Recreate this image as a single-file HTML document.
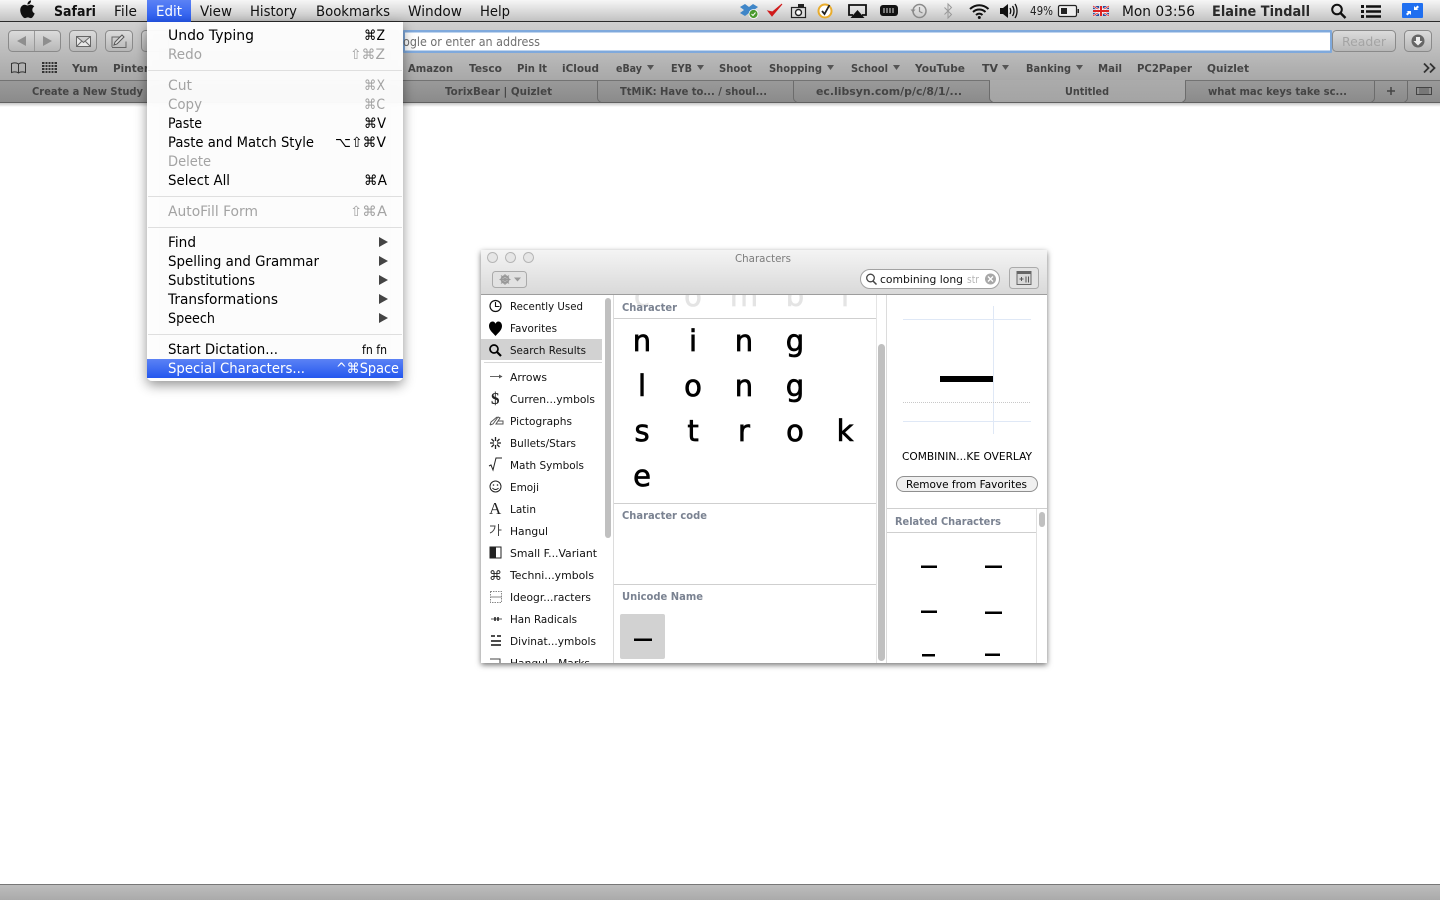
<!DOCTYPE html>
<html><head><meta charset="utf-8"><title>Characters</title>
<style>
html,body{margin:0;padding:0;background:#fff;width:1440px;height:900px;overflow:hidden}
svg{display:block}
text{font-family:"DejaVu Sans","Liberation Sans",sans-serif;white-space:pre}
.mb{font-size:14px;fill:#111}
.bm{font-size:11px;font-weight:bold;fill:#444}
.tb{font-size:11px;font-weight:bold;fill:#444}
.mi{font-size:14px;fill:#000}
.md{font-size:14px;fill:#a3a3a3}
.sb{font-size:11px;fill:#111}
.hd{font-size:11px;font-weight:bold;fill:#7a8291}
.gl{font-size:29px;fill:#000;stroke:#000;stroke-width:.7px;text-anchor:middle}
</style></head><body>
<svg xmlns="http://www.w3.org/2000/svg" width="1440" height="900" viewBox="0 0 1440 900">
<defs>
<linearGradient id="gMenu" x1="0" y1="0" x2="0" y2="1"><stop offset="0" stop-color="#f6f6f6"/><stop offset="1" stop-color="#c2c2c2"/></linearGradient>
<linearGradient id="gTool" x1="0" y1="0" x2="0" y2="1"><stop offset="0" stop-color="#d0d0d0"/><stop offset="1" stop-color="#a8a8a8"/></linearGradient>
<linearGradient id="gTab" x1="0" y1="0" x2="0" y2="1"><stop offset="0" stop-color="#9a9a9a"/><stop offset="1" stop-color="#8b8b8b"/></linearGradient>
<linearGradient id="gTabA" x1="0" y1="0" x2="0" y2="1"><stop offset="0" stop-color="#ababab"/><stop offset="1" stop-color="#a4a4a4"/></linearGradient>
<linearGradient id="gShadow" x1="0" y1="0" x2="0" y2="1"><stop offset="0" stop-color="#000" stop-opacity=".22"/><stop offset="1" stop-color="#000" stop-opacity="0"/></linearGradient>
<linearGradient id="gBlue" x1="0" y1="0" x2="0" y2="1"><stop offset="0" stop-color="#5b82f5"/><stop offset="1" stop-color="#2457ee"/></linearGradient>
<linearGradient id="gWin" x1="0" y1="0" x2="0" y2="1"><stop offset="0" stop-color="#f4f4f4"/><stop offset="1" stop-color="#d9d9d9"/></linearGradient>
<linearGradient id="gBtn" x1="0" y1="0" x2="0" y2="1"><stop offset="0" stop-color="#e4e4e4" stop-opacity=".7"/><stop offset="1" stop-color="#b4b4b4" stop-opacity=".7"/></linearGradient>
<linearGradient id="gStatus" x1="0" y1="0" x2="0" y2="1"><stop offset="0" stop-color="#bdbdbd"/><stop offset="1" stop-color="#aaaaaa"/></linearGradient>
<filter id="fMenu" x="-15%" y="-10%" width="130%" height="125%"><feDropShadow dx="0" dy="4" stdDeviation="6" flood-color="#000" flood-opacity=".45"/></filter>
<filter id="fWin" x="-5%" y="-5%" width="110%" height="112%"><feDropShadow dx="0" dy="2" stdDeviation="3" flood-color="#000" flood-opacity=".55"/></filter>
<clipPath id="cSide"><rect x="481" y="295" width="130" height="368"/></clipPath>
<clipPath id="cTop"><rect x="614" y="295" width="262" height="12"/></clipPath>
<clipPath id="cRel"><rect x="887" y="533" width="149" height="129"/></clipPath>
</defs>

<!-- page -->
<rect width="1440" height="900" fill="#fff"/>
<rect x="0" y="22" width="1440" height="58" fill="url(#gTool)"/>
<rect x="0" y="80" width="1440" height="22" fill="url(#gTab)"/>
<rect x="0" y="80" width="1440" height="1" fill="#737373"/>
<rect x="0" y="102" width="1440" height="1" fill="#606060"/>
<rect x="0" y="103" width="1440" height="4" fill="url(#gShadow)"/>

<!-- toolbar buttons -->
<g fill="url(#gBtn)" stroke="#8a8a8a">
<rect x="8.500" y="30.500" width="52" height="21" rx="4"/>
<rect x="69.500" y="30.500" width="27" height="21" rx="4"/>
<rect x="105.500" y="30.500" width="27" height="21" rx="4"/>
<rect x="141.500" y="30.500" width="27" height="21" rx="4"/>
<rect x="1332.500" y="30.500" width="63" height="21" rx="4"/>
<rect x="1404.500" y="30.500" width="27" height="21" rx="4"/>
</g>
<line x1="34.500" y1="31" x2="34.500" y2="51" stroke="#999"/>
<path d="M17 41l9-5v10zM52 41l-9-5v10z" fill="#8e8e8e"/>
<path d="M76.500 36.500h14v10h-14zM76.500 36.500l7 6 7-6M76.500 46.500l5-5M90.500 46.500l-5-5" fill="#e8e8e8" stroke="#666" stroke-width="1"/>
<path d="M112 47.500h14v-6M121 37h-9v10" fill="none" stroke="#666"/>
<path d="M114 45l1-3 7-7 2 2-7 7z" fill="#ddd" stroke="#555"/>
<circle cx="1418" cy="41" r="6.500" fill="#666"/>
<path d="M1416 37h4v4h2.500l-4.500 4.500-4.500-4.500h2.500z" fill="#eee"/>
<text x="1342" y="46" font-size="12" fill="#a4a4a4" textLength="44" lengthAdjust="spacingAndGlyphs">Reader</text>

<!-- address field -->
<rect x="403" y="30" width="929" height="23" rx="1" fill="#7fa9dc"/>
<rect x="405" y="32.500" width="925" height="18" fill="#fff"/>
<text x="403" y="46" font-size="12" fill="#6f6f6f" textLength="137" lengthAdjust="spacingAndGlyphs">ogle or enter an address</text>

<!-- bookmarks -->
<path d="M11.500 63.500c3-1 5-1 7 .5 2-1.500 4-1.500 7-.5v9c-3-1-5-1-7 .5-2-1.500-4-1.500-7-.5zM18.500 64v9" fill="none" stroke="#333"/>
<g fill="#333"><rect x="42" y="62" width="15" height="2"/><rect x="42" y="65" width="15" height="2"/><rect x="42" y="68" width="15" height="2"/><rect x="42" y="71" width="15" height="2"/></g>
<g stroke="#b8b8b8"><line x1="45" y1="62" x2="45" y2="73"/><line x1="48" y1="62" x2="48" y2="73"/><line x1="51" y1="62" x2="51" y2="73"/><line x1="54" y1="62" x2="54" y2="73"/></g>
<g class="bm">
<text class="bm" x="72" y="72" textLength="26" lengthAdjust="spacingAndGlyphs">Yum</text>
<text class="bm" x="113" y="72" textLength="36" lengthAdjust="spacingAndGlyphs">Pinter</text>
<text class="bm" x="408" y="72" textLength="45" lengthAdjust="spacingAndGlyphs">Amazon</text>
<text class="bm" x="469" y="72" textLength="33" lengthAdjust="spacingAndGlyphs">Tesco</text>
<text class="bm" x="517" y="72" textLength="30" lengthAdjust="spacingAndGlyphs">Pin It</text>
<text class="bm" x="562" y="72" textLength="37" lengthAdjust="spacingAndGlyphs">iCloud</text>
<text class="bm" x="616" y="72" textLength="26" lengthAdjust="spacingAndGlyphs">eBay</text>
<text class="bm" x="671" y="72" textLength="21" lengthAdjust="spacingAndGlyphs">EYB</text>
<text class="bm" x="719" y="72" textLength="33" lengthAdjust="spacingAndGlyphs">Shoot</text>
<text class="bm" x="769" y="72" textLength="53" lengthAdjust="spacingAndGlyphs">Shopping</text>
<text class="bm" x="851" y="72" textLength="37" lengthAdjust="spacingAndGlyphs">School</text>
<text class="bm" x="915" y="72" textLength="50" lengthAdjust="spacingAndGlyphs">YouTube</text>
<text class="bm" x="982" y="72" textLength="16" lengthAdjust="spacingAndGlyphs">TV</text>
<text class="bm" x="1026" y="72" textLength="45" lengthAdjust="spacingAndGlyphs">Banking</text>
<text class="bm" x="1098" y="72" textLength="24" lengthAdjust="spacingAndGlyphs">Mail</text>
<text class="bm" x="1137" y="72" textLength="55" lengthAdjust="spacingAndGlyphs">PC2Paper</text>
<text class="bm" x="1207" y="72" textLength="42" lengthAdjust="spacingAndGlyphs">Quizlet</text>
</g>
<path d="M647 65h7l-3.500 5zM697 65h7l-3.500 5zM827 65h7l-3.500 5zM893 65h7l-3.500 5zM1002 65h7l-3.500 5zM1076 65h7l-3.500 5z" fill="#555"/>
<path d="M1424 63.500l4.500 4.500-4.500 4.500M1430 63.500l4.500 4.500-4.500 4.500" fill="none" stroke="#333" stroke-width="1.800"/>

<!-- tabs -->
<path d="M990 80v18c0 2 1 3 3 4h189c2-1 3-2 3-4v-18z" fill="url(#gTabA)"/>
<g fill="none" stroke="#6c6c6c">
<path d="M597.500 81v17c0 2 1 3 3 4"/>
<path d="M793.500 81v17c0 2 1 3 3 4"/>
<path d="M989.500 81v17c0 2 1 3 3 4"/>
<path d="M1185.500 81v17c0 2-1 3-3 4"/>
<path d="M1374.500 81v17c0 2-1 3-3 4"/>
<path d="M1407.500 81v17c0 2-1 3-3 4"/>
</g>
<text class="tb" x="32" y="95" textLength="111" lengthAdjust="spacingAndGlyphs">Create a New Study</text>
<text class="tb" x="445" y="95" textLength="107" lengthAdjust="spacingAndGlyphs">TorixBear | Quizlet</text>
<text class="tb" x="620" y="95" textLength="147" lengthAdjust="spacingAndGlyphs">TtMiK: Have to... / shoul...</text>
<text class="tb" x="816" y="95" textLength="146" lengthAdjust="spacingAndGlyphs">ec.libsyn.com/p/c/8/1/...</text>
<text class="tb" x="1065" y="95" textLength="44" lengthAdjust="spacingAndGlyphs">Untitled</text>
<text class="tb" x="1208" y="95" textLength="139" lengthAdjust="spacingAndGlyphs">what mac keys take sc...</text>
<path d="M1387 91h8M1391 87v8" stroke="#444" stroke-width="1.500"/>
<path d="M1416.500 87.500h15v7h-15z" fill="none" stroke="#444"/><path d="M1419 88h10v6h-10z" fill="#777"/>

<!-- status bar -->
<rect x="0" y="884" width="1440" height="1" fill="#777"/>
<rect x="0" y="885" width="1440" height="15" fill="url(#gStatus)"/>

<!-- menu bar -->
<rect x="0" y="0" width="1440" height="21" fill="url(#gMenu)"/>
<rect x="0" y="21" width="1440" height="1" fill="#2a2a2a"/>
<rect x="147" y="0" width="44" height="22" fill="url(#gBlue)"/>
<path transform="translate(17 -1) scale(.9)" fill="#111" d="M17.050 12.040c-.03-2.500 2.040-3.700 2.130-3.760-1.160-1.700-2.970-1.930-3.610-1.960-1.540-.16-3 .9-3.780.9-.78 0-1.980-.88-3.260-.86-1.680.03-3.220.98-4.090 2.480-1.740 3.020-.45 7.500 1.250 9.950.83 1.200 1.820 2.550 3.120 2.500 1.250-.05 1.720-.81 3.230-.81 1.510 0 1.930.81 3.250.78 1.340-.02 2.190-1.220 3.010-2.430.95-1.390 1.340-2.740 1.360-2.810-.03-.01-2.610-1-2.640-3.980zM14.560 4.700c.69-.84 1.160-2 1.030-3.160-1 .04-2.200.66-2.920 1.500-.64.74-1.200 1.920-1.050 3.060 1.110.09 2.250-.57 2.940-1.400z"/>
<text class="mb" x="54" y="16" font-weight="bold" textLength="42" lengthAdjust="spacingAndGlyphs">Safari</text>
<text class="mb" x="114" y="16" textLength="23" lengthAdjust="spacingAndGlyphs">File</text>
<text class="mb" x="156" y="16" style="fill:#fff" textLength="26" lengthAdjust="spacingAndGlyphs">Edit</text>
<text class="mb" x="200" y="16" textLength="32" lengthAdjust="spacingAndGlyphs">View</text>
<text class="mb" x="250" y="16" textLength="47" lengthAdjust="spacingAndGlyphs">History</text>
<text class="mb" x="316" y="16" textLength="74" lengthAdjust="spacingAndGlyphs">Bookmarks</text>
<text class="mb" x="408" y="16" textLength="54" lengthAdjust="spacingAndGlyphs">Window</text>
<text class="mb" x="480" y="16" textLength="30" lengthAdjust="spacingAndGlyphs">Help</text>

<!-- menu extras -->
<g>
<path d="M745 4l-5 3 4 3-4 3 5 3 4-3 4 3 5-3-4-3 4-3-5-3-4 3z" fill="#3f86c8"/>
<circle cx="753.500" cy="14" r="4.500" fill="#4a9a2e" stroke="#fff" stroke-width=".8"/>
<path d="M751.500 14l1.500 1.500 2.500-3" fill="none" stroke="#fff"/>
<path d="M768 11l4 5 10-12-9.500 8z" fill="#d01a1a" stroke="#d01a1a" stroke-width="1"/>
<rect x="791.500" y="7.500" width="14" height="10" fill="#ddd" stroke="#222" stroke-width="1.200"/>
<rect x="798" y="4" width="6" height="3" fill="#222"/>
<circle cx="798.500" cy="12.500" r="3" fill="#fff" stroke="#222" stroke-width="1.400"/>
<circle cx="825" cy="11" r="6.500" fill="#fff" stroke="#e9ac2c" stroke-width="2"/>
<path d="M822 11l2.500 3 5-9" fill="none" stroke="#222" stroke-width="1.800"/>
<path d="M853 15h-4v-10h17v10h-4" fill="none" stroke="#111" stroke-width="1.800"/>
<path d="M857.500 10l7 8h-14z" fill="#111"/>
<rect x="880" y="5" width="18" height="11" rx="3" fill="#111"/>
<path d="M884 8v5M887 8v5M890 8v5M893 8v5" stroke="#bbb" stroke-width="1.200"/>
<circle cx="919.500" cy="11" r="6.500" fill="none" stroke="#8a8a8a" stroke-width="1.500"/>
<path d="M919.500 7v4.500l3 1.500" fill="none" stroke="#8a8a8a" stroke-width="1.200"/>
<path d="M910.500 9.500l2.500 3 2.500-3z" fill="#8a8a8a"/>
<path d="M944.500 7.500l7 7-3.500 3.500v-14l3.500 3.500-7 7" fill="none" stroke="#999" stroke-width="1"/>
<path d="M970 9c5.500-5 13-5 18.500 0M973 12c3.700-3.300 8.800-3.300 12.500 0M976 15c2-1.800 4.500-1.800 6.500 0" fill="none" stroke="#111" stroke-width="2"/>
<circle cx="979.300" cy="17.500" r="1.500" fill="#111"/>
<path d="M1000 8h3l5-4v14l-5-4h-3z" fill="#111"/>
<path d="M1010 8c1 2 1 4 0 6M1012.500 6c2 3 2 7 0 10M1015 4c2.700 4 2.700 10 0 14" fill="none" stroke="#111" stroke-width="1.300"/>
<text x="1030" y="15" font-size="12" fill="#222" textLength="23" lengthAdjust="spacingAndGlyphs">49%</text>
<rect x="1058.500" y="5.500" width="18" height="11" rx="1.500" fill="#eee" stroke="#222" stroke-width="1.200"/>
<rect x="1061" y="8" width="6" height="6" fill="#222"/>
<rect x="1077.500" y="9" width="1.500" height="4" fill="#222"/>
<rect x="1093" y="6" width="16" height="10" fill="#2a4a9a"/>
<path d="M1093 6l16 10M1109 6l-16 10" stroke="#fff" stroke-width="2"/>
<path d="M1093 6l16 10M1109 6l-16 10" stroke="#d22" stroke-width=".8"/>
<path d="M1101 6v10M1093 11h16" stroke="#fff" stroke-width="3.500"/>
<path d="M1101 6v10M1093 11h16" stroke="#d22" stroke-width="2"/>
<text class="mb" x="1122" y="16" textLength="73" lengthAdjust="spacingAndGlyphs">Mon 03:56</text>
<text class="mb" x="1212" y="16" font-weight="bold" style="fill:#2a2a2a" textLength="98" lengthAdjust="spacingAndGlyphs">Elaine Tindall</text>
<circle cx="1337" cy="9.500" r="4.800" fill="none" stroke="#111" stroke-width="2"/>
<path d="M1340.500 13l5 5" stroke="#111" stroke-width="2.400"/>
<path d="M1361 5h3v3h-3zM1361 10h3v3h-3zM1361 15h3v3h-3z" fill="#111"/>
<path d="M1366 6.500h15M1366 11.500h15M1366 16.500h15" stroke="#111" stroke-width="2.400"/>
<rect x="1402" y="3" width="21" height="15" rx="1" fill="#1f6ff0"/>
<path d="M1414 10v-4l1.500 1.500 2-2 1.500 1.500-2 2 1.500 1zM1411 11v4l-1.500-1.500-2 2-1.500-1.500 2-2-1.500-1z" fill="#fff"/>
</g>

<!-- Edit menu -->
<g filter="url(#fMenu)"><path d="M147 22h256v354a5 5 0 0 1-5 5h-246a5 5 0 0 1-5-5z" fill="#fff" fill-opacity=".95"/></g>
<g fill="#dfdfdf"><rect x="148" y="70" width="254" height="1"/><rect x="148" y="196" width="254" height="1"/><rect x="148" y="227" width="254" height="1"/><rect x="148" y="334" width="254" height="1"/></g>
<rect x="147" y="359" width="256" height="19" fill="url(#gBlue)"/>
<text class="mi" x="168" y="40" textLength="86" lengthAdjust="spacingAndGlyphs">Undo Typing</text>
<text class="md" x="168" y="59" textLength="34" lengthAdjust="spacingAndGlyphs">Redo</text>
<text class="md" x="168" y="90" textLength="24" lengthAdjust="spacingAndGlyphs">Cut</text>
<text class="md" x="168" y="109" textLength="34" lengthAdjust="spacingAndGlyphs">Copy</text>
<text class="mi" x="168" y="128" textLength="34" lengthAdjust="spacingAndGlyphs">Paste</text>
<text class="mi" x="168" y="147" textLength="146" lengthAdjust="spacingAndGlyphs">Paste and Match Style</text>
<text class="md" x="168" y="166" textLength="43" lengthAdjust="spacingAndGlyphs">Delete</text>
<text class="mi" x="168" y="185" textLength="62" lengthAdjust="spacingAndGlyphs">Select All</text>
<text class="md" x="168" y="216" textLength="90" lengthAdjust="spacingAndGlyphs">AutoFill Form</text>
<text class="mi" x="168" y="247" textLength="28" lengthAdjust="spacingAndGlyphs">Find</text>
<text class="mi" x="168" y="266" textLength="151" lengthAdjust="spacingAndGlyphs">Spelling and Grammar</text>
<text class="mi" x="168" y="285" textLength="87" lengthAdjust="spacingAndGlyphs">Substitutions</text>
<text class="mi" x="168" y="304" textLength="110" lengthAdjust="spacingAndGlyphs">Transformations</text>
<text class="mi" x="168" y="323" textLength="47" lengthAdjust="spacingAndGlyphs">Speech</text>
<text class="mi" x="168" y="354" textLength="110" lengthAdjust="spacingAndGlyphs">Start Dictation...</text>
<text class="mi" x="168" y="373" style="fill:#fff" textLength="137" lengthAdjust="spacingAndGlyphs">Special Characters...</text>
<text class="mi" x="364" y="40" textLength="21" lengthAdjust="spacingAndGlyphs">⌘Z</text>
<text class="md" x="350" y="59" textLength="35" lengthAdjust="spacingAndGlyphs">⇧⌘Z</text>
<text class="md" x="364" y="90" textLength="21" lengthAdjust="spacingAndGlyphs">⌘X</text>
<text class="md" x="364" y="109" textLength="21" lengthAdjust="spacingAndGlyphs">⌘C</text>
<text class="mi" x="364" y="128" textLength="22" lengthAdjust="spacingAndGlyphs">⌘V</text>
<text class="mi" x="335" y="147" textLength="51" lengthAdjust="spacingAndGlyphs">⌥⇧⌘V</text>
<text class="mi" x="364" y="185" textLength="23" lengthAdjust="spacingAndGlyphs">⌘A</text>
<text class="md" x="350" y="216" textLength="37" lengthAdjust="spacingAndGlyphs">⇧⌘A</text>
<text x="362" y="354" font-size="12" fill="#000" textLength="25" lengthAdjust="spacingAndGlyphs">fn fn</text>
<text class="mi" x="336" y="373" style="fill:#fff" textLength="63" lengthAdjust="spacingAndGlyphs">^⌘Space</text>
<path d="M379 237l9 5-9 5zM379 256l9 5-9 5zM379 275l9 5-9 5zM379 294l9 5-9 5zM379 313l9 5-9 5z" fill="#444"/>

<!-- Characters window -->
<g filter="url(#fWin)"><rect x="481" y="250" width="566" height="413" fill="#fff"/></g>
<rect x="481" y="250" width="566" height="44" fill="url(#gWin)"/>
<rect x="481" y="294" width="566" height="1" fill="#9d9d9d"/>
<g fill="#e6e6e6" stroke="#b5b5b5"><circle cx="492.500" cy="257.500" r="5"/><circle cx="510.500" cy="257.500" r="5"/><circle cx="528.500" cy="257.500" r="5"/></g>
<text x="735" y="262" font-size="11" fill="#7b7b7b" textLength="56" lengthAdjust="spacingAndGlyphs">Characters</text>
<rect x="492.500" y="271.500" width="34" height="16" rx="3" fill="#e2e2e2" stroke="#aaa"/>
<circle cx="505" cy="279.500" r="3.500" fill="none" stroke="#999" stroke-width="2"/>
<path d="M505 274v11M499.500 279.500h11M501 275.500l8 8M509 275.500l-8 8" stroke="#999"/>
<path d="M514 277.500h7l-3.500 4z" fill="#999"/>
<rect x="860.500" y="269.500" width="139" height="19" rx="9.500" fill="#fff" stroke="#a2a2a2"/>
<circle cx="870.500" cy="278" r="3.800" fill="none" stroke="#444" stroke-width="1.300"/>
<path d="M873 281l3.500 3.500" stroke="#444" stroke-width="1.500"/>
<text x="880" y="283" font-size="11" fill="#111" textLength="83" lengthAdjust="spacingAndGlyphs">combining long</text>
<text x="967" y="283" font-size="11" fill="#b5b5b5" textLength="12" lengthAdjust="spacingAndGlyphs">str</text>
<circle cx="990.500" cy="279" r="5.500" fill="#a8a8a8"/>
<path d="M988 276.500l5 5M993 276.500l-5 5" stroke="#fff" stroke-width="1.300"/>
<rect x="1009.500" y="267.500" width="29" height="21" rx="3" fill="#e2e2e2" stroke="#aaa"/>
<rect x="1017" y="271.500" width="14" height="13" fill="#d8d8d8" stroke="#666"/>
<rect x="1017" y="271.500" width="14" height="2.500" fill="#666"/>
<path d="M1019.500 279h4M1021.500 277v4M1026 276.500v6M1028.500 276.500v6" stroke="#555"/>

<!-- sidebar -->
<rect x="481" y="339" width="121" height="21" fill="#d2d2d2"/>
<rect x="484" y="362" width="118" height="1" fill="#d8d8d8"/>
<rect x="605" y="298" width="6" height="240" rx="3" fill="#c0c0c0"/>
<rect x="613" y="295" width="1" height="368" fill="#dcdcdc"/>
<g clip-path="url(#cSide)">
<text class="sb" x="510" y="310" textLength="73" lengthAdjust="spacingAndGlyphs">Recently Used</text>
<text class="sb" x="510" y="332" textLength="47" lengthAdjust="spacingAndGlyphs">Favorites</text>
<text class="sb" x="510" y="354" textLength="76" lengthAdjust="spacingAndGlyphs">Search Results</text>
<text class="sb" x="510" y="381" textLength="37" lengthAdjust="spacingAndGlyphs">Arrows</text>
<text class="sb" x="510" y="403" textLength="85" lengthAdjust="spacingAndGlyphs">Curren...ymbols</text>
<text class="sb" x="510" y="425" textLength="62" lengthAdjust="spacingAndGlyphs">Pictographs</text>
<text class="sb" x="510" y="447" textLength="66" lengthAdjust="spacingAndGlyphs">Bullets/Stars</text>
<text class="sb" x="510" y="469" textLength="74" lengthAdjust="spacingAndGlyphs">Math Symbols</text>
<text class="sb" x="510" y="491" textLength="29" lengthAdjust="spacingAndGlyphs">Emoji</text>
<text class="sb" x="510" y="513" textLength="26" lengthAdjust="spacingAndGlyphs">Latin</text>
<text class="sb" x="510" y="535" textLength="38" lengthAdjust="spacingAndGlyphs">Hangul</text>
<text class="sb" x="510" y="557" textLength="87" lengthAdjust="spacingAndGlyphs">Small F...Variant</text>
<text class="sb" x="510" y="579" textLength="84" lengthAdjust="spacingAndGlyphs">Techni...ymbols</text>
<text class="sb" x="510" y="601" textLength="81" lengthAdjust="spacingAndGlyphs">Ideogr...racters</text>
<text class="sb" x="510" y="623" textLength="67" lengthAdjust="spacingAndGlyphs">Han Radicals</text>
<text class="sb" x="510" y="645" textLength="86" lengthAdjust="spacingAndGlyphs">Divinat...ymbols</text>
<text class="sb" x="510" y="667" textLength="80" lengthAdjust="spacingAndGlyphs">Hangul...Marks</text>
<!-- sidebar icons -->
<circle cx="495.500" cy="306" r="5.500" fill="none" stroke="#111" stroke-width="1.200"/>
<path d="M495.500 302v4.500h4" fill="none" stroke="#111" stroke-width="1.100"/>
<path d="M495.500 336c-3-3.500-6.500-6-6.500-10 0-2.500 1.500-4.500 3.500-4.500 1.500 0 2.500 1 3 2.200.5-1.200 1.500-2.200 3-2.200 2 0 3.500 2 3.500 4.500 0 4-3.500 6.500-6.500 10z" fill="#000"/>
<circle cx="494" cy="349" r="4" fill="none" stroke="#000" stroke-width="1.700"/>
<path d="M497 352l4 4" stroke="#000" stroke-width="2.200"/>
<path d="M490 376.500h12" stroke="#666"/><path d="M499 374.500l3.500 2-3.500 2z" fill="#555"/>
<text x="491" y="404" font-size="17" font-weight="bold" fill="#222" style="font-family:'Liberation Serif',serif">$</text>
<path d="M490 425l3-1 5-7 2 1-4 6h7v-3h-5M490 425l1-3 6-5" fill="none" stroke="#555"/>
<path d="M495.500 437v4M495.500 445v4M490 443h4M497 443h4M491.500 439l2.500 2.500M499.500 439l-2.500 2.500M491.500 447l2.500-2.500M499.500 447l-2.500-2.500" stroke="#222" stroke-width="1.300"/>
<path d="M489 466l2-1 2 5 3-12h6" fill="none" stroke="#222"/>
<circle cx="495.500" cy="486.500" r="5.500" fill="none" stroke="#222"/>
<circle cx="493.500" cy="485" r=".8" fill="#222"/><circle cx="497.500" cy="485" r=".8" fill="#222"/>
<path d="M492.500 488c1.500 2 4.500 2 6 0" fill="none" stroke="#222"/>
<text x="489" y="514" font-size="17" fill="#222" style="font-family:'Liberation Serif',serif">A</text>
<path d="M490 526h5c0 3-2 6-5 7M498.500 524v12M498.500 530h3" fill="none" stroke="#444"/>
<rect x="490" y="547" width="11" height="11" fill="#fff" stroke="#222"/><rect x="490" y="547" width="6" height="11" fill="#222"/>
<text x="489" y="580" font-size="13" fill="#222">⌘</text>
<rect x="490.500" y="591.500" width="11" height="11" fill="#fff" stroke="#888" stroke-dasharray="1.500 1"/>
<path d="M490 597h12" stroke="#888"/>
<path d="M491 619h11" stroke="#555"/><path d="M495 617v4M498 617v4" stroke="#111" stroke-width="1.400"/>
<path d="M491 636h4M497 636h4M491 641h10M491 645h10" stroke="#111" stroke-width="1.500"/>
<path d="M490 659h10v4" fill="none" stroke="#444"/>
</g>

<!-- center -->
<g clip-path="url(#cTop)" opacity=".1">
<text class="gl" x="642" y="306">c</text><text class="gl" x="693" y="306">o</text><text class="gl" x="744" y="306">m</text><text class="gl" x="795" y="306">b</text><text class="gl" x="845" y="306">i</text>
</g>
<text class="hd" x="622" y="311" textLength="55" lengthAdjust="spacingAndGlyphs">Character</text>
<rect x="614" y="318" width="262" height="1" fill="#cfcfcf"/>
<rect x="614" y="503" width="262" height="1" fill="#cfcfcf"/>
<rect x="614" y="584" width="262" height="1" fill="#cfcfcf"/>
<text class="gl" x="642" y="351">n</text><text class="gl" x="693" y="351">i</text><text class="gl" x="744" y="351">n</text><text class="gl" x="795" y="351">g</text>
<text class="gl" x="642" y="396">l</text><text class="gl" x="693" y="396">o</text><text class="gl" x="744" y="396">n</text><text class="gl" x="795" y="396">g</text>
<text class="gl" x="642" y="441">s</text><text class="gl" x="693" y="441">t</text><text class="gl" x="744" y="441">r</text><text class="gl" x="795" y="441">o</text><text class="gl" x="845" y="441">k</text>
<text class="gl" x="642" y="486">e</text>
<text class="hd" x="622" y="519" textLength="85" lengthAdjust="spacingAndGlyphs">Character code</text>
<text class="hd" x="622" y="600" textLength="81" lengthAdjust="spacingAndGlyphs">Unicode Name</text>
<rect x="620" y="614" width="45" height="45" rx="2" fill="#d2d2d2"/>
<rect x="634" y="638.500" width="18" height="2.500" fill="#000"/>
<rect x="876" y="295" width="1" height="368" fill="#e4e4e4"/>
<rect x="878" y="344" width="7" height="317" rx="3.500" fill="#c0c0c0"/>
<rect x="886" y="295" width="1" height="368" fill="#dcdcdc"/>

<!-- right -->
<g fill="#dfe8f6"><rect x="903" y="319" width="128" height="1"/><rect x="903" y="421" width="128" height="1"/><rect x="993" y="306" width="1" height="128"/></g>
<path d="M903 402.500h127" stroke="#c8c8c8" stroke-dasharray="1 1"/>
<rect x="940" y="376" width="53" height="6" fill="#000"/>
<text x="902" y="460" font-size="11" fill="#000" textLength="130" lengthAdjust="spacingAndGlyphs">COMBININ...KE OVERLAY</text>
<rect x="896.500" y="476.500" width="141" height="15" rx="7.500" fill="#f0f0f0" stroke="#8f8f8f"/>
<text x="906" y="488" font-size="11" fill="#000" textLength="121" lengthAdjust="spacingAndGlyphs">Remove from Favorites</text>
<rect x="887" y="508" width="160" height="1" fill="#cfcfcf"/>
<text class="hd" x="895" y="525" textLength="106" lengthAdjust="spacingAndGlyphs">Related Characters</text>
<rect x="887" y="532" width="149" height="1" fill="#cfcfcf"/>
<rect x="1036" y="509" width="1" height="154" fill="#e0e0e0"/>
<rect x="1039" y="512" width="6" height="15" rx="3" fill="#c0c0c0"/>
<g clip-path="url(#cRel)" fill="#000">
<rect x="921" y="565.500" width="16" height="2.500"/><rect x="985" y="565.500" width="17" height="2.500"/>
<rect x="921" y="610.500" width="16" height="2.500"/><rect x="985" y="611.500" width="17" height="2.500"/>
<rect x="922" y="654" width="13" height="2.500"/><rect x="985" y="653.500" width="15" height="2.500"/>
</g>
</svg>
</body></html>
